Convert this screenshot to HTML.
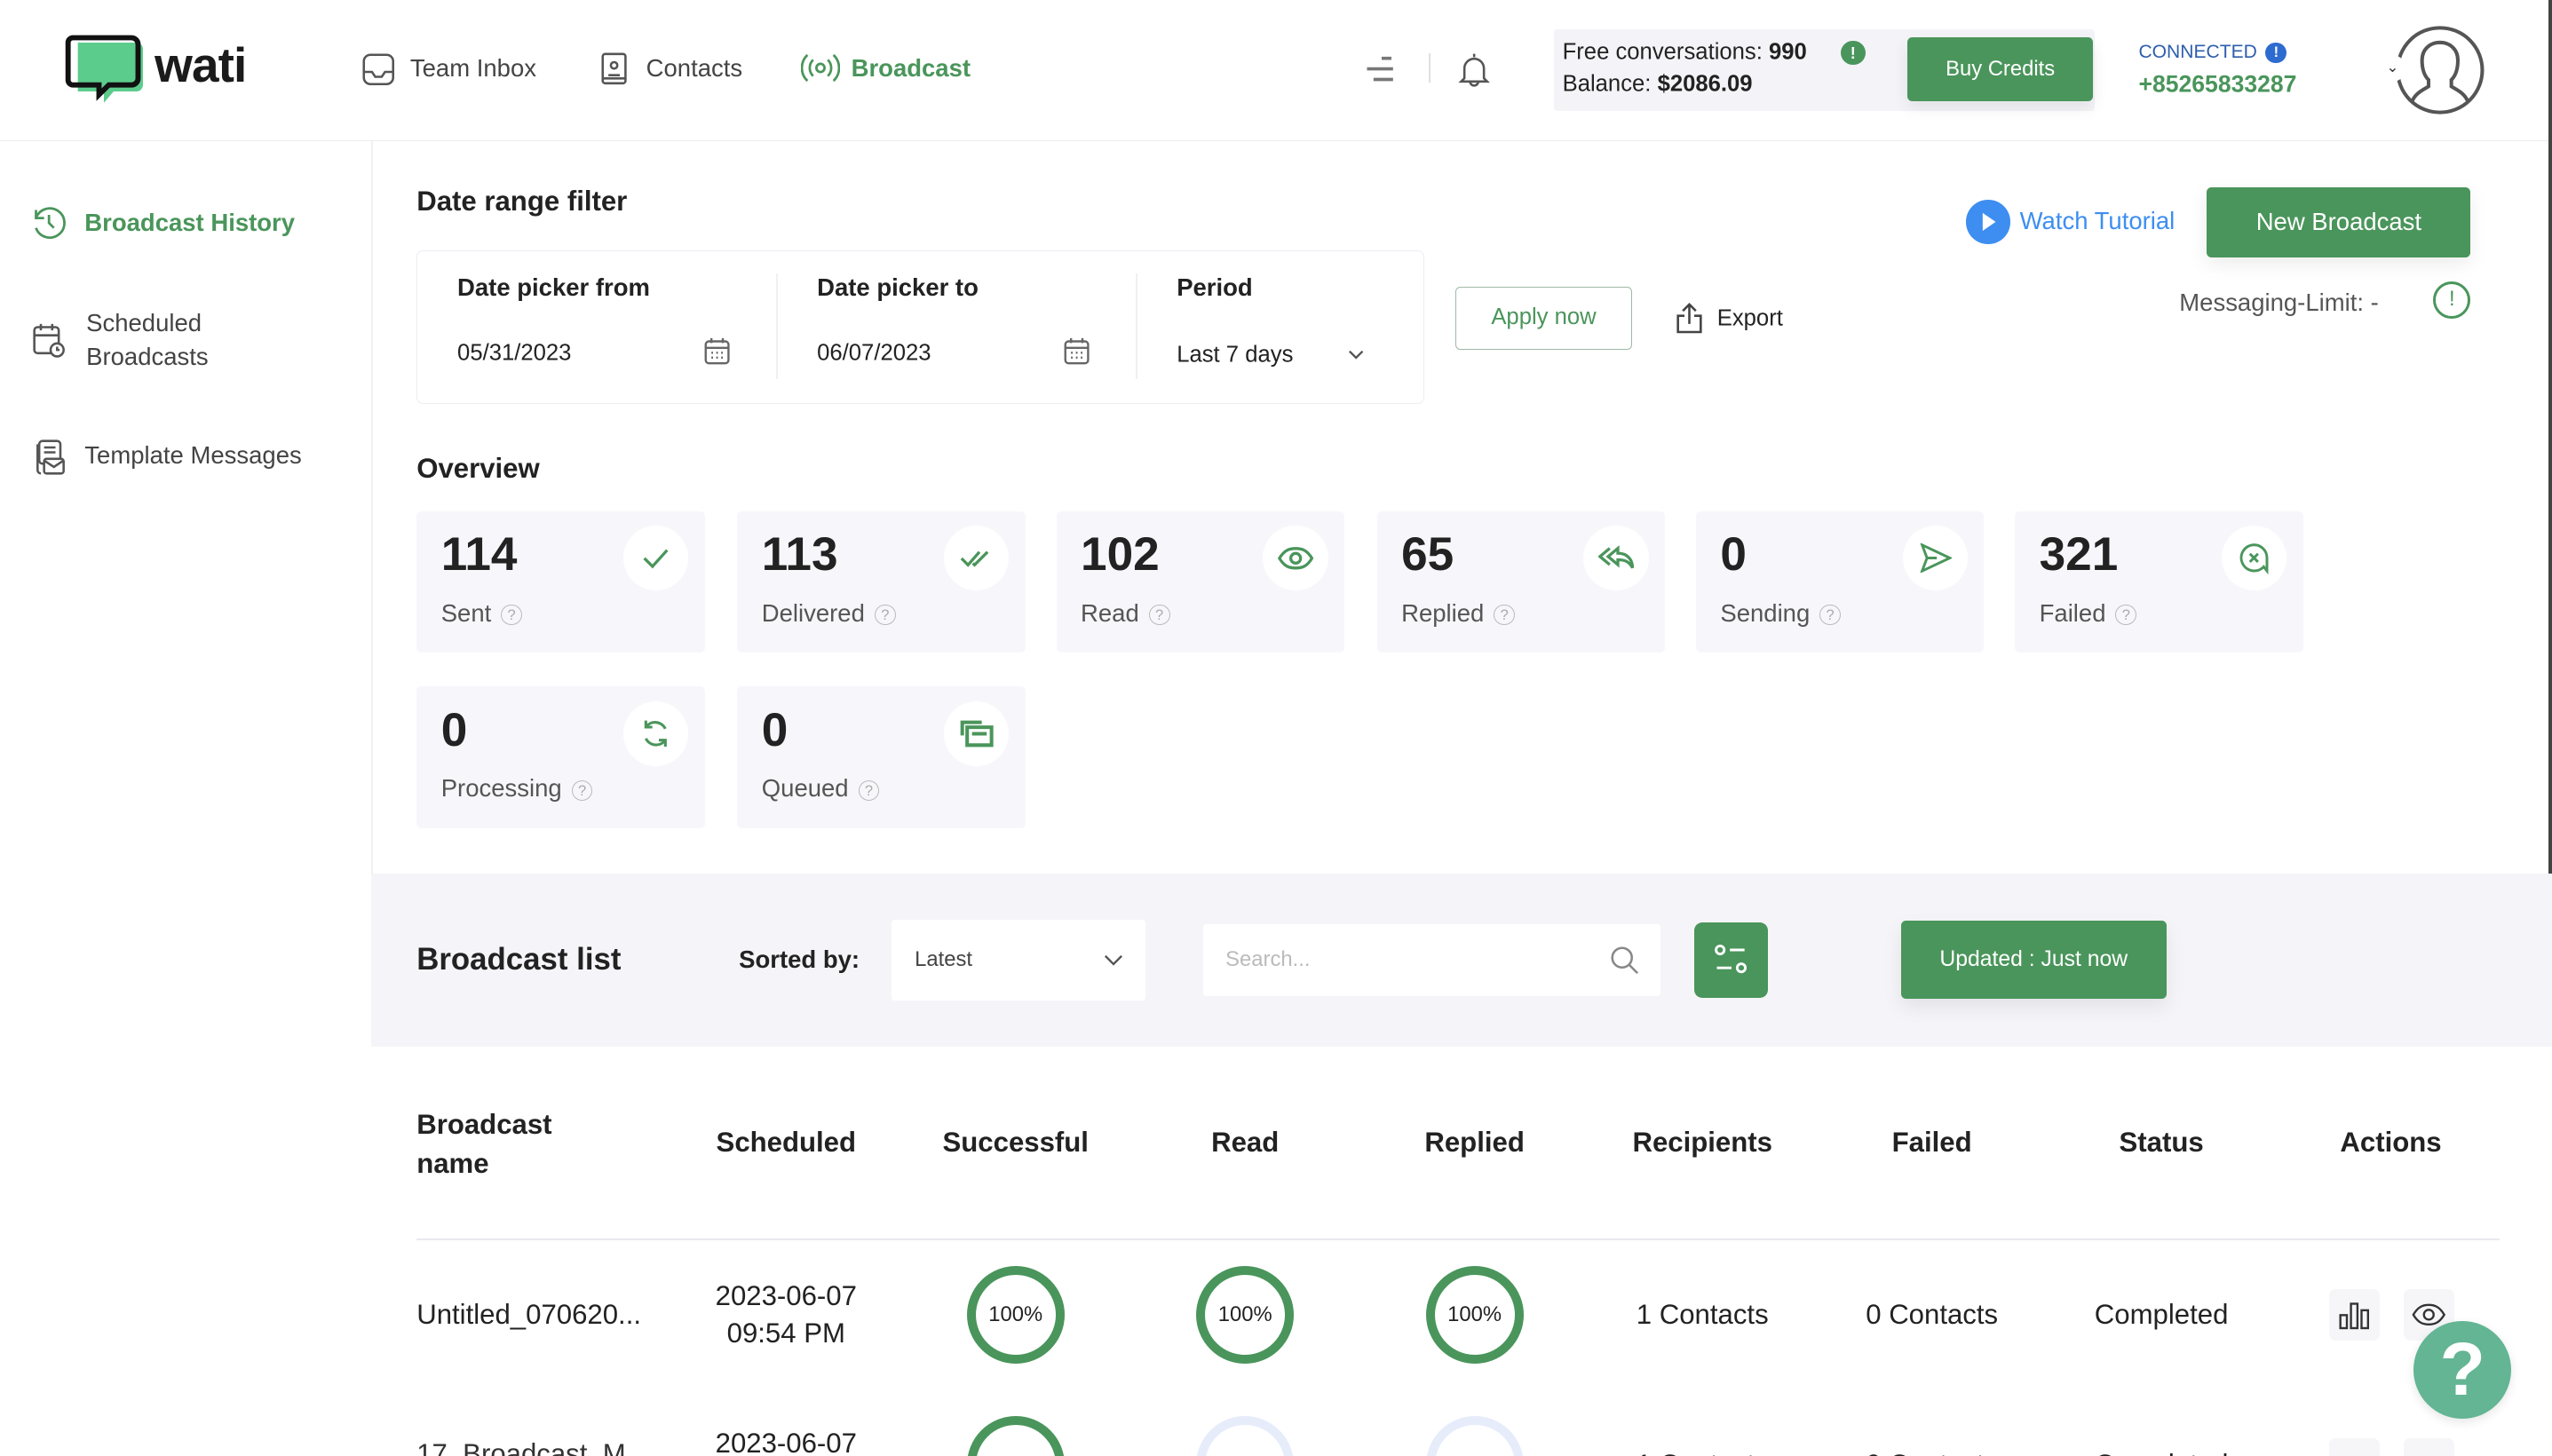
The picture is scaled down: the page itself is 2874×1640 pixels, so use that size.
<!DOCTYPE html>
<html><head><meta charset="utf-8">
<style>
html{zoom:1.83291;overflow:hidden}
*{box-sizing:border-box;margin:0;padding:0}
body{width:1568px;height:895px;overflow:hidden;background:#fff;font-family:"Liberation Sans",sans-serif;color:#222}
#root{position:relative;width:1568px;height:895px;overflow:hidden}
.a{position:absolute}
.g{color:#4a955b}
.mid{transform:translateY(-50%);white-space:nowrap}
.card{position:absolute;width:177px;height:87px;background:#f7f7fb;border-radius:3px}
.card .n{position:absolute;left:15px;top:10px;font-size:29px;font-weight:bold;color:#222}
.card .l{position:absolute;left:15px;top:54px;font-size:15px;color:#555}
.q{display:inline-block;width:13px;height:13px;border:1px solid #bbb;border-radius:50%;font-size:9px;color:#aaa;text-align:center;line-height:12px;margin-left:6px;vertical-align:1px}
.card .ic{position:absolute;left:127px;top:9px;width:40px;height:40px;border-radius:50%;background:#fff;display:flex;align-items:center;justify-content:center}
.th{position:absolute;top:702px;transform:translate(-50%,-50%);font-size:17px;font-weight:bold;white-space:nowrap}
.td{position:absolute;transform:translate(-50%,-50%);font-size:17px;white-space:nowrap;text-align:center;line-height:23px}
.ring{position:absolute;width:60px;height:60px;border-radius:50%;border:6px solid #4a955b;transform:translate(-50%,-50%);display:flex;align-items:center;justify-content:center;font-size:13px}
</style></head><body><div id="root">
<div class="a" style="left:0;top:86px;width:1568px;height:1px;background:#ececec"></div>
<svg class="a" style="left:40px;top:20px" width="50" height="44" viewBox="0 0 50 44"><path d="M8 6h36a4 4 0 0 1 4 4v22a4 4 0 0 1-4 4H30l-6 7v-7H8z" fill="#5ccc8c"/><path d="M5 3h36a4 4 0 0 1 4 4v21a4 4 0 0 1-4 4H27l-6 6v-6H5a3 3 0 0 1-3-3V6a3 3 0 0 1 3-3z" fill="none" stroke="#111" stroke-width="3.2"/></svg>
<div class="a mid" style="left:95px;top:40px;font-size:30px;font-weight:bold;color:#1b1b1b;letter-spacing:-0.5px">wati</div>
<svg class="a" style="left:222px;top:32px" width="21" height="21" viewBox="0 0 21 21" fill="none" stroke="#555" stroke-width="1.4"><rect x="1.5" y="1.5" width="18" height="18" rx="4"/><path d="M1.5 12h5l2 3h4l2-3h5"/></svg>
<div class="a mid" style="left:252px;top:42px;font-size:15px;color:#444">Team Inbox</div>
<svg class="a" style="left:369px;top:32px" width="17" height="21" viewBox="0 0 17 21" fill="none" stroke="#555" stroke-width="1.4"><rect x="1.5" y="1" width="14" height="18" rx="1.5"/><circle cx="8.5" cy="8" r="2"/><path d="M5 14h7M1.5 16h14"/></svg>
<div class="a mid" style="left:397px;top:42px;font-size:15px;color:#444">Contacts</div>
<svg class="a" style="left:492px;top:33px" width="24" height="18" viewBox="0 0 24 18" fill="none" stroke="#4a955b" stroke-width="1.5"><circle cx="12" cy="9" r="2.5"/><path d="M7.5 4a7 7 0 0 0 0 10M16.5 4a7 7 0 0 1 0 10M4 1a11 11 0 0 0 0 16M20 1a11 11 0 0 1 0 16"/></svg>
<div class="a mid g" style="left:523px;top:42px;font-size:15px;font-weight:bold">Broadcast</div>
<svg class="a" style="left:837px;top:34px" width="22" height="18" viewBox="0 0 22 18" stroke="#777" stroke-width="2"><path d="M12 2h6M3 8.5h16M7 15h12"/></svg>
<div class="a" style="left:878px;top:33px;width:1px;height:18px;background:#e0e0e0"></div>
<svg class="a" style="left:895px;top:31px" width="22" height="24" viewBox="0 0 22 24" fill="none" stroke="#555" stroke-width="1.4"><path d="M11 2v2M5 17V11a6 6 0 0 1 12 0v6l2 2H3z"/><path d="M8.5 19a2.5 2.5 0 0 0 5 0"/></svg>
<div class="a" style="left:955px;top:18px;width:332px;height:50px;background:#f4f4f8;border-radius:2px"></div>
<div class="a mid" style="left:960px;top:32px;font-size:14px">Free conversations: <b>990</b></div>
<div class="a" style="left:1131px;top:25px;width:15px;height:15px;border-radius:50%;background:#4a955b;color:#fff;font-size:10px;text-align:center;line-height:15px;font-weight:bold">!</div>
<div class="a mid" style="left:960px;top:52px;font-size:14px">Balance: <b>$2086.09</b></div>
<div class="a" style="left:1172px;top:23px;width:114px;height:39px;background:#4a955b;border-radius:3px;color:#fff;font-size:13px;text-align:center;line-height:39px;box-shadow:0 4px 10px rgba(0,0,0,.08)">Buy Credits</div>
<div class="a mid" style="left:1314px;top:32px;font-size:11.5px;color:#2e5dae">CONNECTED</div>
<div class="a" style="left:1392px;top:26px;width:13px;height:13px;border-radius:50%;background:#2e6bd0;color:#fff;font-size:9px;text-align:center;line-height:13px;font-weight:bold">!</div>
<div class="a mid g" style="left:1314px;top:52px;font-size:14.5px;font-weight:bold">+85265833287</div>
<svg class="a" style="left:1468px;top:13px" width="60" height="60" viewBox="0 0 60 60" fill="none" stroke="#555" stroke-width="2.2"><circle cx="31" cy="30" r="26"/><path d="M14 49c2-5 7-7 10-9v-4c-3-3-4-7-4-12 0-7 5-11 11-11s11 4 11 11c0 5-1 9-4 12v4c3 2 8 4 10 9"/></svg>
<div class="a" style="left:1462px;top:34px;width:16px;height:16px;border-radius:50%;background:#fff;font-size:9px;text-align:center;line-height:16px;color:#333">&#8964;</div>
<div class="a" style="left:1566px;top:0;width:2px;height:580px;background:#444"></div>

<div class="a" style="left:228px;top:87px;width:1px;height:450px;background:#f0f0f0"></div>
<svg class="a" style="left:19px;top:126px" width="22" height="22" viewBox="0 0 22 22" fill="none" stroke="#4a955b" stroke-width="1.5"><path d="M3 8a9 9 0 1 1 0 6"/><path d="M3 3v5h5"/><path d="M11 6v5l3 3"/></svg>
<div class="a mid g" style="left:52px;top:137px;font-size:15px;font-weight:bold">Broadcast History</div>
<svg class="a" style="left:19px;top:198px" width="22" height="24" viewBox="0 0 22 24" fill="none" stroke="#555" stroke-width="1.4"><rect x="2" y="3" width="15" height="16" rx="2"/><path d="M6 1v4M13 1v4M2 8h15"/><circle cx="16" cy="17" r="4" fill="#fff"/><path d="M16 15v2h1.5"/></svg>
<div class="a" style="left:53px;top:188px;font-size:15px;color:#444;line-height:21px">Scheduled<br>Broadcasts</div>
<svg class="a" style="left:19px;top:269px" width="22" height="24" viewBox="0 0 22 24" fill="none" stroke="#555" stroke-width="1.4"><path d="M4 4v16a2 2 0 0 0 2 2"/><rect x="5" y="2" width="13" height="14" rx="2"/><path d="M8 6h7M8 9h7"/><rect x="8" y="13" width="12" height="9" rx="1.5" fill="#fff"/><path d="M8 14l6 4 6-4"/></svg>
<div class="a mid" style="left:52px;top:280px;font-size:15px;color:#444">Template Messages</div>

<div class="a mid" style="left:256px;top:124px;font-size:17px;font-weight:bold">Date range filter</div>
<div class="a" style="left:256px;top:154px;width:619px;height:94px;border:1px solid #ededf2;border-radius:4px"></div>
<div class="a" style="left:477px;top:168px;width:1px;height:65px;background:#f0f0f0"></div>
<div class="a" style="left:698px;top:168px;width:1px;height:65px;background:#f0f0f0"></div>
<div class="a mid" style="left:281px;top:177px;font-size:15px;font-weight:bold">Date picker from</div>
<div class="a mid" style="left:502px;top:177px;font-size:15px;font-weight:bold">Date picker to</div>
<div class="a mid" style="left:723px;top:177px;font-size:15px;font-weight:bold">Period</div>
<div class="a mid" style="left:281px;top:217px;font-size:14px">05/31/2023</div>
<div class="a mid" style="left:502px;top:217px;font-size:14px">06/07/2023</div>
<div class="a mid" style="left:723px;top:218px;font-size:14px">Last 7 days</div>
<svg class="a" style="left:432px;top:207px" width="17" height="18" viewBox="0 0 17 18" fill="none" stroke="#666" stroke-width="1.3"><rect x="1.5" y="3" width="14" height="13.5" rx="2"/><path d="M5 1v3M12 1v3M1.5 7h14M5 10h1M8 10h1M11 10h1M5 13h1M8 13h1M11 13h1"/></svg>
<svg class="a" style="left:653px;top:207px" width="17" height="18" viewBox="0 0 17 18" fill="none" stroke="#666" stroke-width="1.3"><rect x="1.5" y="3" width="14" height="13.5" rx="2"/><path d="M5 1v3M12 1v3M1.5 7h14M5 10h1M8 10h1M11 10h1M5 13h1M8 13h1M11 13h1"/></svg>
<svg class="a" style="left:828px;top:214px" width="10" height="8" viewBox="0 0 10 8" fill="none" stroke="#555" stroke-width="1.3"><path d="M1 2l4 4 4-4"/></svg>
<div class="a" style="left:894px;top:176px;width:109px;height:39px;border:1px solid #9fb9a5;border-radius:3px;color:#4a955b;font-size:14px;text-align:center;line-height:37px">Apply now</div>
<svg class="a" style="left:1029px;top:186px" width="18" height="20" viewBox="0 0 18 20" fill="none" stroke="#444" stroke-width="1.4"><path d="M6 8H2v10h14V8h-4M9 13V1M5 5l4-4 4 4"/></svg>
<div class="a mid" style="left:1055px;top:196px;font-size:14px">Export</div>
<div class="a" style="left:1208px;top:123px;width:27px;height:27px;border-radius:50%;background:#3d8ef0"></div>
<svg class="a" style="left:1217px;top:130px" width="10" height="13" viewBox="0 0 10 13"><path d="M1 1l8 5.5L1 12z" fill="#fff"/></svg>
<div class="a mid" style="left:1241px;top:136px;font-size:15px;color:#3d8ef0">Watch Tutorial</div>
<div class="a" style="left:1356px;top:115px;width:162px;height:43px;background:#4a955b;border-radius:3px;color:#fff;font-size:15px;text-align:center;line-height:43px;box-shadow:0 4px 12px rgba(0,0,0,.08)">New Broadcast</div>
<div class="a mid" style="left:1339px;top:186px;font-size:15px;color:#555">Messaging-Limit: -</div>
<div class="a" style="left:1495px;top:173px;width:23px;height:23px;border-radius:50%;border:2px solid #4a955b;color:#4a955b;font-size:13px;text-align:center;line-height:19px">!</div>

<div class="a mid" style="left:256px;top:288px;font-size:17px;font-weight:bold">Overview</div>
<div class="card" style="left:256px;top:314px"><div class="n">114</div><div class="l">Sent<span class="q">?</span></div><div class="ic"><svg width="18" height="14" viewBox="0 0 18 14" fill="none" stroke="#4a955b" stroke-width="1.8"><path d="M2 7l5 5 9-10"/></svg></div></div>
<div class="card" style="left:453px;top:314px"><div class="n">113</div><div class="l">Delivered<span class="q">?</span></div><div class="ic"><svg width="20" height="12" viewBox="0 0 20 12" fill="none" stroke="#4a955b" stroke-width="1.8"><path d="M1 6l4 4 7-8M8 9l1 1 8-8"/></svg></div></div>
<div class="card" style="left:649px;top:314px"><div class="n">102</div><div class="l">Read<span class="q">?</span></div><div class="ic"><svg width="22" height="14" viewBox="0 0 22 14" fill="none" stroke="#4a955b" stroke-width="1.8"><path d="M1 7c3-5 6-6 10-6s7 1 10 6c-3 5-6 6-10 6S4 12 1 7z"/><circle cx="11" cy="7" r="3"/></svg></div></div>
<div class="card" style="left:846px;top:314px"><div class="n">65</div><div class="l">Replied<span class="q">?</span></div><div class="ic"><svg width="22" height="16" viewBox="0 0 22 16" fill="none" stroke="#4a955b" stroke-width="1.8"><path d="M7 2L1 7l6 5M12 2L6 7l6 5V9c4 0 7 1 9 5 0-5-3-9-9-9z"/></svg></div></div>
<div class="card" style="left:1042px;top:314px"><div class="n">0</div><div class="l">Sending<span class="q">?</span></div><div class="ic"><svg width="20" height="18" viewBox="0 0 20 18" fill="none" stroke="#4a955b" stroke-width="1.6"><path d="M2 1l17 8-17 8 3-8zM5 9h6"/></svg></div></div>
<div class="card" style="left:1238px;top:314px"><div class="n">321</div><div class="l">Failed<span class="q">?</span></div><div class="ic"><svg width="20" height="20" viewBox="0 0 20 20" fill="none" stroke="#4a955b" stroke-width="1.6"><path d="M10 2a8 8 0 1 0 6 13.5l2 2.5V10a8 8 0 0 0-8-8z"/><path d="M7.5 7.5l5 5M12.5 7.5l-5 5"/></svg></div></div>
<div class="card" style="left:256px;top:422px"><div class="n">0</div><div class="l">Processing<span class="q">?</span></div><div class="ic"><svg width="20" height="20" viewBox="0 0 20 20" fill="none" stroke="#4a955b" stroke-width="1.7"><path d="M16 7a7 7 0 0 0-12-1M4 13a7 7 0 0 0 12 1M4 2v4h4M16 18v-4h-4"/></svg></div></div>
<div class="card" style="left:453px;top:422px"><div class="n">0</div><div class="l">Queued<span class="q">?</span></div><div class="ic"><svg width="22" height="18" viewBox="0 0 22 18" fill="none" stroke="#4a955b" stroke-width="2.2"><path d="M2 10V2h12M5 5h15v11H5z"/><path d="M8 9h9"/></svg></div></div>

<div class="a" style="left:228px;top:537px;width:1340px;height:106px;background:#f5f5f9"></div>
<div class="a mid" style="left:256px;top:590px;font-size:19px;font-weight:bold">Broadcast list</div>
<div class="a mid" style="left:454px;top:590px;font-size:15px;font-weight:bold">Sorted by:</div>
<div class="a" style="left:548px;top:565px;width:156px;height:50px;background:#fff;border-radius:2px"></div>
<div class="a mid" style="left:562px;top:590px;font-size:13px;color:#444">Latest</div>
<svg class="a" style="left:678px;top:586px" width="12" height="8" viewBox="0 0 12 8" fill="none" stroke="#555" stroke-width="1.3"><path d="M1 1.5l5 5 5-5"/></svg>
<div class="a" style="left:739px;top:568px;width:281px;height:44px;background:#fff;border-radius:2px"></div>
<div class="a mid" style="left:753px;top:590px;font-size:13px;color:#bbb">Search...</div>
<svg class="a" style="left:989px;top:581px" width="18" height="18" viewBox="0 0 18 18" fill="none" stroke="#888" stroke-width="1.4"><circle cx="7.5" cy="7.5" r="6"/><path d="M12 12l5 5"/></svg>
<div class="a" style="left:1041px;top:567px;width:45px;height:46px;background:#4a955b;border-radius:5px"></div>
<svg class="a" style="left:1052px;top:578px" width="24" height="24" viewBox="0 0 24 24" fill="none" stroke="#fff" stroke-width="1.6"><circle cx="5" cy="6" r="2.5"/><path d="M11 6h9M3 17h9"/><circle cx="18" cy="17" r="2.5"/></svg>
<div class="a" style="left:1168px;top:566px;width:163px;height:48px;background:#4a955b;border-radius:3px;color:#fff;font-size:13.5px;text-align:center;line-height:48px;box-shadow:0 5px 12px rgba(0,0,0,.08)">Updated : Just now</div>

<div class="a" style="left:256px;top:679px;font-size:17px;font-weight:bold;line-height:24px">Broadcast<br>name</div>
<div class="th" style="left:483px">Scheduled</div>
<div class="th" style="left:624px">Successful</div>
<div class="th" style="left:765px">Read</div>
<div class="th" style="left:906px">Replied</div>
<div class="th" style="left:1046px">Recipients</div>
<div class="th" style="left:1187px">Failed</div>
<div class="th" style="left:1328px">Status</div>
<div class="th" style="left:1469px">Actions</div>
<div class="a" style="left:256px;top:761px;width:1280px;height:1px;background:#ebe8f0"></div>

<div class="a mid" style="left:256px;top:808px;font-size:17px">Untitled_070620...</div>
<div class="td" style="left:483px;top:808px">2023-06-07<br>09:54 PM</div>
<div class="ring" style="left:624px;top:808px">100%</div>
<div class="ring" style="left:765px;top:808px">100%</div>
<div class="ring" style="left:906px;top:808px">100%</div>
<div class="td" style="left:1046px;top:808px">1 Contacts</div>
<div class="td" style="left:1187px;top:808px">0 Contacts</div>
<div class="td" style="left:1328px;top:808px">Completed</div>
<div class="a" style="left:1431px;top:792px;width:31px;height:32px;background:#f6f6f9;border-radius:4px"></div>
<svg class="a" style="left:1436px;top:798px" width="21" height="20" viewBox="0 0 21 20" fill="none" stroke="#333" stroke-width="1.3"><rect x="2" y="10" width="4" height="8"/><rect x="8.5" y="3" width="4" height="15"/><rect x="15" y="7" width="4" height="11"/></svg>
<div class="a" style="left:1477px;top:792px;width:31px;height:32px;background:#f6f6f9;border-radius:4px"></div>
<svg class="a" style="left:1482px;top:801px" width="21" height="14" viewBox="0 0 21 14" fill="none" stroke="#333" stroke-width="1.3"><path d="M1 7c3-5 6-6 9.5-6S17 2 20 7c-3 5-6 6-9.5 6S4 12 1 7z"/><circle cx="10.5" cy="7" r="3"/></svg>

<div class="td" style="left:483px;top:887px">2023-06-07</div>
<div class="a" style="left:256px;top:884px;font-size:17px;white-space:nowrap;color:#333">17_Broadcast_M...</div>
<div class="ring" style="left:624px;top:900px"></div>
<div class="ring" style="left:765px;top:900px;border-color:#e6ecfa"></div>
<div class="ring" style="left:906px;top:900px;border-color:#e6ecfa"></div>
<div class="td" style="left:1046px;top:900px">1 Contacts</div>
<div class="td" style="left:1187px;top:900px">0 Contacts</div>
<div class="td" style="left:1328px;top:900px">Completed</div>
<div class="a" style="left:1431px;top:884px;width:31px;height:32px;background:#f6f6f9;border-radius:4px"></div>
<div class="a" style="left:1477px;top:884px;width:31px;height:32px;background:#f6f6f9;border-radius:4px"></div>

<div class="a" style="left:1483px;top:812px;width:60px;height:60px;border-radius:50%;background:#63b593;box-shadow:0 2px 6px rgba(0,0,0,.1);color:#fff;font-size:46px;font-weight:bold;text-align:center;line-height:60px">?</div>
</div></body></html>
